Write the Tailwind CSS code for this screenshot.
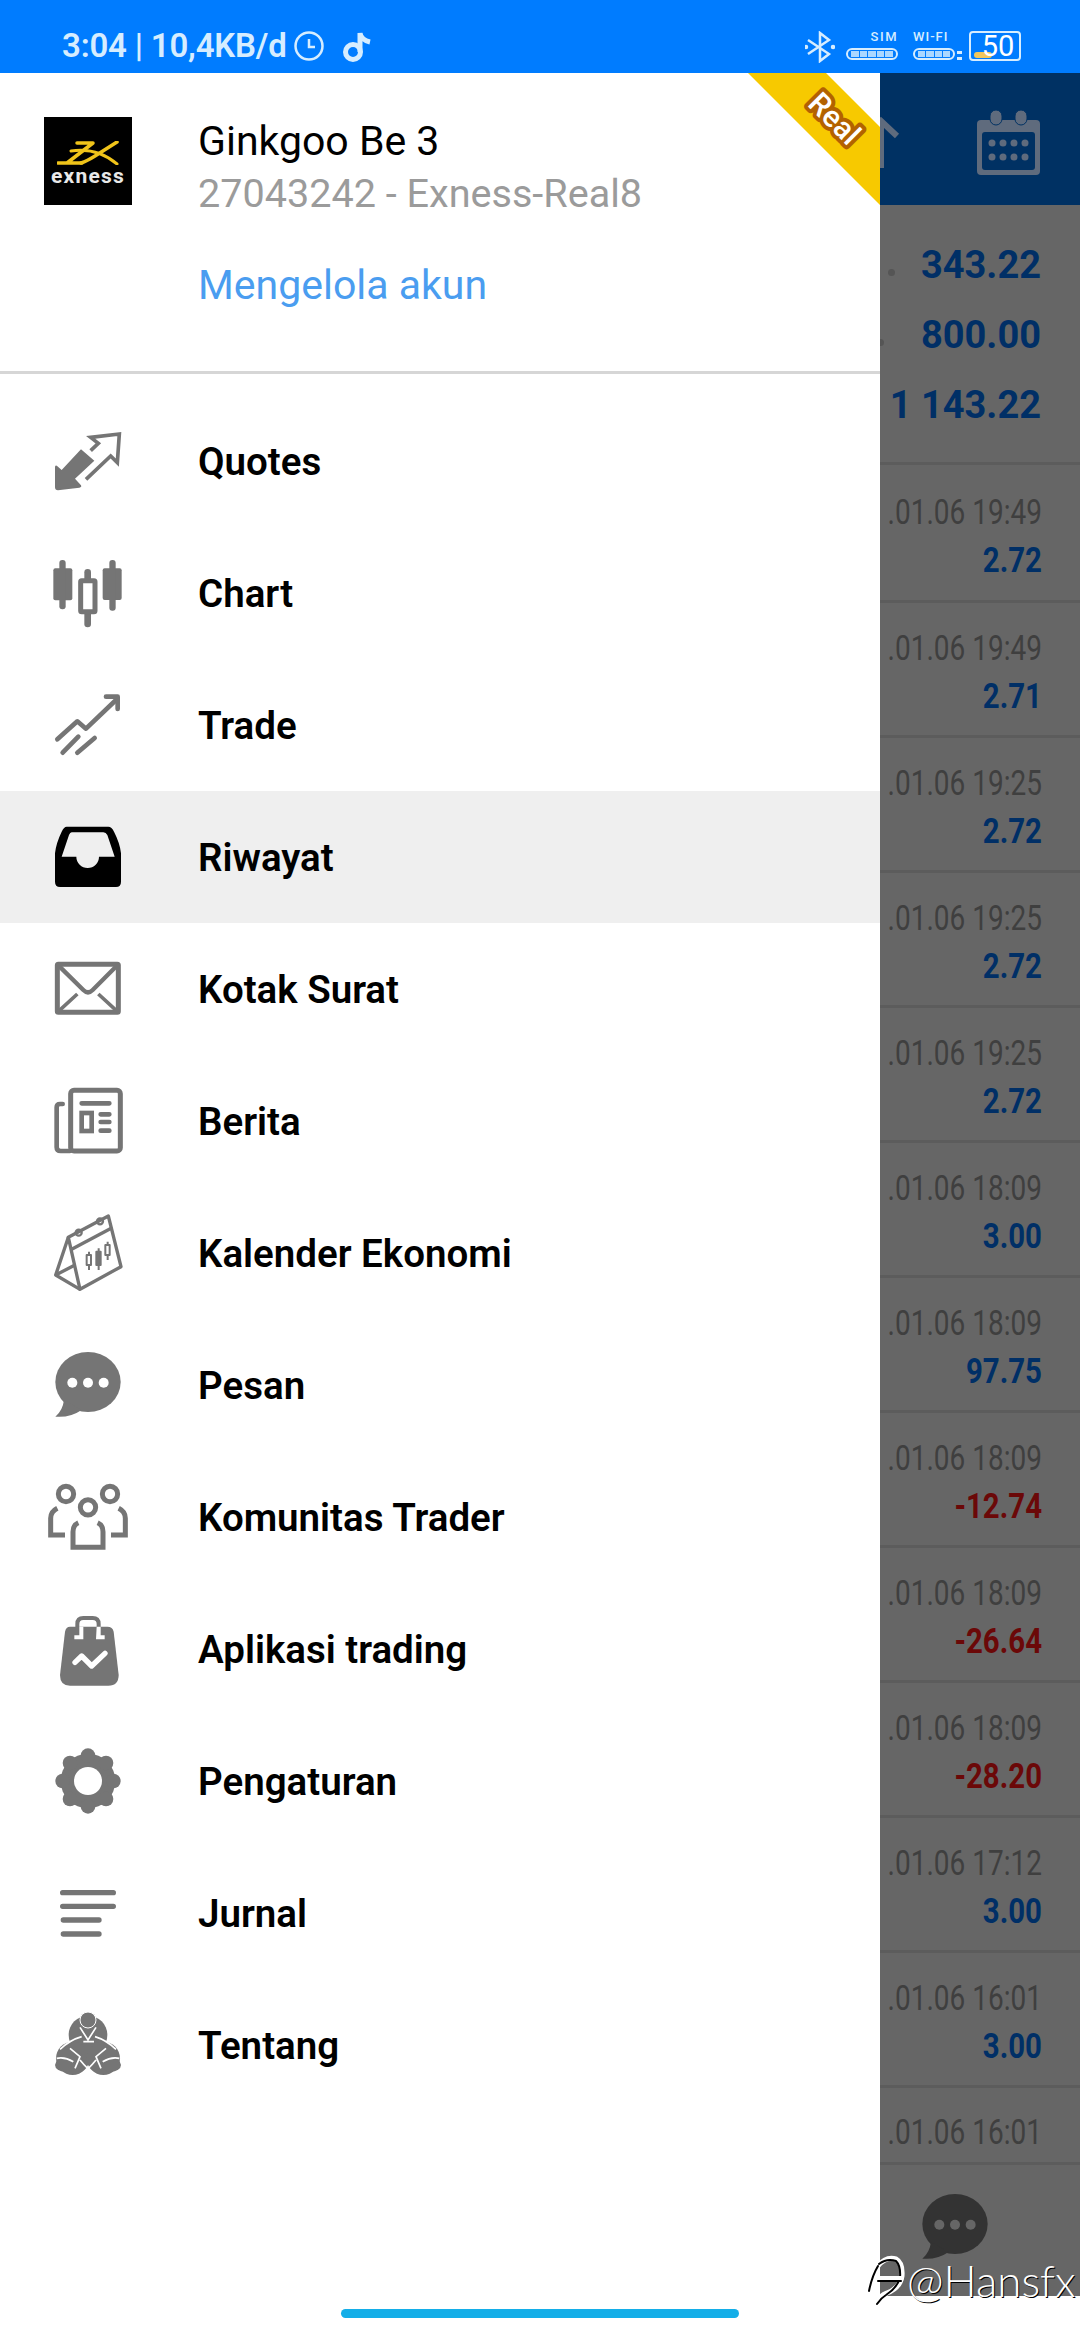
<!DOCTYPE html>
<html lang="en">
<head>
  <meta charset="UTF-8">
  <meta name="viewport" content="width=device-width, initial-scale=1.0">
  <title>Menu</title>
  <script src="https://cdn.jsdelivr.net/npm/@tailwindcss/browser@4"></script>
</head>
<body class="bg-white font-['Roboto',sans-serif]">
<div class="relative w-[1080px] h-[2340px] overflow-hidden flex flex-col bg-white">

  <!-- status bar -->
  <div class="h-[73px] bg-[#007cff] flex items-start text-[#d6edff] shrink-0">
    <div class="ml-[62px] mt-[25px] text-[33px] leading-[42px] font-semibold tracking-[-0.2px] whitespace-nowrap">3:04 | 10,4KB/d</div>
    <svg class="ml-[7px] mt-[31px]" width="30" height="30" viewBox="0 0 30 30" fill="none" stroke="#d6edff"><circle cx="15" cy="15" r="13.5" stroke-width="2.5"/><path d="M15 8v8h6" stroke-width="2.5"/></svg>
    <svg class="ml-[18px] mt-[30px]" width="32" height="33" viewBox="0 0 32 33" fill="none" stroke="#d6edff" stroke-width="5"><circle cx="11" cy="22" r="7.5"/><path d="M18 22V3q1 7 10 9"/></svg>
    <div class="ml-auto mr-[59px] mt-[31px] flex items-start">
      <svg class="mr-[11px]" width="30" height="32" viewBox="0 0 30 32" fill="none" stroke="#d6edff" stroke-width="2.5"><path d="M3 9l21 14-9 7V2l9 7L3 23"/><circle cx="1" cy="16" r="1" fill="#d6edff"/><circle cx="28" cy="16" r="1" fill="#d6edff"/></svg>
      <div class="w-[52px] flex flex-col items-end">
        <div class="text-[13px] leading-[12px] tracking-[1.5px] font-medium">SIM</div>
        <div class="mt-[5px] w-[52px] h-[12px] rounded-full border-2 border-[#d6edff] px-[3px] py-[1px] flex gap-[1px]">
          <div class="flex-1 bg-[#d6edff]/80"></div><div class="flex-1 bg-[#d6edff]/80"></div><div class="flex-1 bg-[#d6edff]/80"></div><div class="flex-1 bg-[#d6edff]/80"></div><div class="flex-1 bg-[#d6edff]/80"></div>
        </div>
      </div>
      <div class="ml-[15px] w-[42px] flex flex-col items-start">
        <div class="text-[13px] leading-[12px] tracking-[1px] font-medium whitespace-nowrap">WI-FI</div>
        <div class="mt-[5px] w-[42px] h-[12px] rounded-full border-2 border-[#d6edff] px-[3px] py-[1px] flex gap-[1px]">
          <div class="flex-1 bg-[#d6edff]/80"></div><div class="flex-1 bg-[#d6edff]/80"></div><div class="flex-1 bg-[#d6edff]/80"></div><div class="flex-1 bg-[#d6edff]/80"></div>
        </div>
      </div>
      <div class="ml-[2px] mt-[20px] mr-[7px] w-[5px] h-[9px] border-y-[3px] border-[#d6edff]"></div>
      <div class="relative w-[52px] h-[30px] rounded-[4px] border-2 border-[#d6edff] flex items-center justify-center">
        <div class="absolute left-[3px] bottom-[1px] w-[18px] h-[6px] rounded-full bg-[#f2c75c]"></div>
        <span class="relative text-[29px] leading-[28px] ml-[6px] text-white">50</span>
      </div>
    </div>
  </div>

  <div class="flex h-[2223px]">
    <!-- drawer -->
    <div class="relative w-[880px] bg-white flex flex-col shrink-0">
      <svg class="absolute right-0 top-0" width="132" height="132" viewBox="0 0 132 132">
        <path d="M0 0H78L132 54V132Z" fill="#f7c900"/>
        <text x="87" y="56" transform="rotate(45 87 45)" text-anchor="middle" font-family="Roboto" font-weight="500" font-size="30" fill="#fff" stroke="#b36200" stroke-width="8" stroke-linejoin="round" class="[paint-order:stroke]">Real</text>
      </svg>

      <div class="h-[298px] flex pl-[44px] border-b-[3px] border-[#d6d6d6] box-content shrink-0">
        <div class="mt-[44px] w-[88px] h-[88px] bg-black flex flex-col items-center shrink-0">
          <svg class="mt-[24px]" width="62" height="24" viewBox="0 0 62 24" fill="none" stroke="#f0c41a" stroke-linecap="round" stroke-linejoin="round"><path d="M20 2H36L10 22M1 22H25" stroke-width="3.5"/><path d="M60 1L38 15Q30 20 24 22" stroke-width="3.5"/><path d="M14 10Q40 6 60 23" stroke-width="3"/></svg>
          <div class="text-[21px] leading-[24px] mt-[-1px] font-bold text-[#e8e8e8] tracking-[1.2px]">exness</div>
        </div>
        <div class="ml-[66px] mt-[45px] flex flex-col whitespace-nowrap">
          <div class="text-[41px] leading-[46px] text-black">Ginkgoo Be 3</div>
          <div class="mt-[7px] text-[39.6px] leading-[46px] text-[#9b9b9b]">27043242 - Exness-Real8</div>
          <div class="mt-[45px] text-[41px] leading-[46px] text-[#4a9df0]">Mengelola akun</div>
        </div>
      </div>

      <div class="pt-[21px] flex flex-col text-[38.5px] font-semibold text-black">
        <div class="h-[132px] flex items-center">
          <div class="w-[176px] flex justify-center"><svg class="overflow-visible" width="80" height="80" viewBox="84 33 240 240" fill="#757575"><path d="M105 172Q105 162 114 170L125 180L183 118L223 152L165 206L183 226Q186 232 178 233L114 241Q105 241 105 232Z"/><path d="M212 122L235 100L212 82L298 72L292 158L272 138L198 208" fill="none" stroke="#757575" stroke-width="11"/></svg></div>
          <div class="ml-[22px] pt-[2px]">Quotes</div>
        </div>
        <div class="h-[132px] flex items-center">
          <div class="w-[176px] flex justify-center"><svg class="overflow-visible" width="80" height="80" viewBox="84 429 240 240" fill="#757575"><rect x="100" y="475" width="57" height="96" rx="6"/><rect x="118" y="450" width="19" height="148" rx="9"/><rect x="248" y="475" width="57" height="95" rx="6"/><rect x="268" y="450" width="19" height="152" rx="9"/><rect x="193" y="477" width="20" height="175" rx="10"/><rect x="182" y="512" width="43" height="93" rx="3" fill="#fff" stroke="#757575" stroke-width="15"/></svg></div>
          <div class="ml-[22px] pt-[2px]">Chart</div>
        </div>
        <div class="h-[132px] flex items-center">
          <div class="w-[176px] flex justify-center"><svg class="overflow-visible" width="80" height="80" viewBox="84 825 240 240" fill="none" stroke="#757575" stroke-width="14" stroke-linecap="round" stroke-linejoin="round"><path d="M112 988L172 934L198 956L288 870"/><path d="M258 860H293V897"/><path d="M128 1028L175 980M172 1028L224 984"/></svg></div>
          <div class="ml-[22px] pt-[2px]">Trade</div>
        </div>
        <div class="h-[132px] flex items-center bg-[#efefef]">
          <div class="w-[176px] flex justify-center"><svg class="overflow-visible" width="80" height="80" viewBox="84 1221 240 240"><path d="M140 1250H265Q275 1250 282 1265Q300 1300 303 1330V1415Q303 1431 288 1431H120Q105 1431 105 1415V1330Q108 1300 125 1265Q132 1250 140 1250Z" fill="#000"/><path d="M155 1267H250Q258 1267 262 1275L284 1340H237A34 34 0 0 1 169 1340H125L147 1275Q150 1267 155 1267Z" fill="#efefef"/></svg></div>
          <div class="ml-[22px] pt-[2px]">Riwayat</div>
        </div>
        <div class="h-[132px] flex items-center">
          <div class="w-[176px] flex justify-center"><svg class="overflow-visible" width="80" height="80" viewBox="84 87 240 240" fill="none" stroke="#757575"><rect x="112" y="133" width="183" height="144" rx="3" stroke-width="15"/><path d="M112 133L190 210Q204 224 218 210L295 133" stroke-width="13"/><path d="M112 277L172 222M295 277L235 222" stroke-width="11"/></svg></div>
          <div class="ml-[22px] pt-[2px]">Kotak Surat</div>
        </div>
        <div class="h-[132px] flex items-center">
          <div class="w-[176px] flex justify-center"><svg class="overflow-visible" width="80" height="80" viewBox="84 483 240 240" fill="none" stroke="#757575"><rect x="152" y="511" width="149" height="182" rx="10" stroke-width="15"/><path d="M128 552H120Q110 552 110 562V682Q110 693 122 693H150" stroke-width="14" stroke-linecap="round"/><path d="M185 550H268M242 583H268M242 606H268M242 632H268" stroke-width="14" stroke-linecap="round"/><rect x="185" y="579" width="30" height="54" stroke-width="14"/></svg></div>
          <div class="ml-[22px] pt-[2px]">Berita</div>
        </div>
        <div class="h-[132px] flex items-center">
          <div class="w-[176px] flex justify-center"><svg class="overflow-visible" width="80" height="80" viewBox="84 879 240 240" fill="none" stroke="#757575" stroke-width="10" stroke-linejoin="round"><path d="M145 952L265 888L303 1040L180 1108Z"/><path d="M155 988L275 924"/><path d="M145 952L107 1065L180 1108M107 1065L165 1035"/><circle cx="176" cy="938" r="9" stroke-width="7"/><circle cx="240" cy="904" r="9" stroke-width="7"/><g stroke-width="6"><path d="M207 995V1050M236 985V1050M263 965V1020"/><rect x="200" y="1005" width="13" height="30" fill="#fff"/><rect x="229" y="995" width="13" height="40" fill="#757575"/><rect x="256" y="975" width="13" height="30" fill="#fff"/></g></svg></div>
          <div class="ml-[22px] pt-[2px]">Kalender Ekonomi</div>
        </div>
        <div class="h-[132px] flex items-center">
          <div class="w-[176px] flex justify-center"><svg class="overflow-visible" width="80" height="80" viewBox="84 1275 240 240" fill="#757575"><ellipse cx="204" cy="1386" rx="98" ry="90"/><path d="M132 1440Q128 1472 106 1490Q150 1494 185 1470Z"/><g fill="#fff"><circle cx="157" cy="1388" r="15"/><circle cx="204" cy="1388" r="15"/><circle cx="251" cy="1388" r="15"/></g></svg></div>
          <div class="ml-[22px] pt-[2px]">Pesan</div>
        </div>
        <div class="h-[132px] flex items-center">
          <div class="w-[176px] flex justify-center"><svg class="overflow-visible" width="80" height="80" viewBox="84 141 240 240" fill="none" stroke="#757575" stroke-width="15"><circle cx="138" cy="192" r="23"/><circle cx="270" cy="192" r="23"/><circle cx="204" cy="232" r="23"/><path d="M112 235Q92 245 92 265V315H135M296 235Q316 245 316 265V315H273"/><path d="M175 278Q159 285 159 305V352H249V305Q249 285 233 278"/></svg></div>
          <div class="ml-[22px] pt-[2px]">Komunitas Trader</div>
        </div>
        <div class="h-[132px] flex items-center">
          <div class="w-[176px] flex justify-center"><svg class="overflow-visible" width="80" height="80" viewBox="84 537 240 240" fill="#757575"><path d="M172 592V582Q172 564 190 564H218Q236 564 236 582V592" fill="none" stroke="#757575" stroke-width="12"/><path d="M150 590H262Q278 590 281 605L296 735Q296 767 265 767H150Q120 767 120 735L135 605Q138 590 150 590Z"/><path d="M178 590H190V628H163V616H178ZM230 590H242V616H254V628H228Z" fill="#fff"/><path d="M165 697L185 678L215 708L255 670" fill="none" stroke="#fff" stroke-width="16" stroke-linecap="round" stroke-linejoin="round"/></svg></div>
          <div class="ml-[22px] pt-[2px]">Aplikasi trading</div>
        </div>
        <div class="h-[132px] flex items-center">
          <div class="w-[176px] flex justify-center"><svg class="overflow-visible" width="80" height="80" viewBox="84 933 240 240" fill="#757575"><circle cx="204" cy="1053" r="82"/><circle cx="204" cy="977" r="22"/><circle cx="258" cy="999" r="22"/><circle cx="280" cy="1053" r="22"/><circle cx="258" cy="1107" r="22"/><circle cx="204" cy="1129" r="22"/><circle cx="150" cy="1107" r="22"/><circle cx="128" cy="1053" r="22"/><circle cx="150" cy="999" r="22"/><circle cx="204" cy="1053" r="42" fill="#fff"/></svg></div>
          <div class="ml-[22px] pt-[2px]">Pengaturan</div>
        </div>
        <div class="h-[132px] flex items-center">
          <div class="w-[176px] flex justify-center"><svg class="overflow-visible" width="80" height="80" viewBox="84 99 240 240" fill="none" stroke="#757575" stroke-width="16" stroke-linecap="round"><path d="M128 158H280M128 199H280M130 240H237M130 282H237"/></svg></div>
          <div class="ml-[22px] pt-[2px]">Jurnal</div>
        </div>
        <div class="h-[132px] flex items-center">
          <div class="w-[176px] flex justify-center"><svg class="overflow-visible" width="80" height="80" viewBox="84 495 240 240" fill="#757575"><circle cx="204" cy="585" r="58"/><circle cx="158" cy="655" r="50"/><circle cx="250" cy="655" r="50"/><ellipse cx="135" cy="675" rx="30" ry="20"/><ellipse cx="273" cy="675" rx="30" ry="20"/><circle cx="204" cy="540" r="24" stroke="#fff" stroke-width="3"/><g fill="none" stroke="#fff" stroke-width="5"><path d="M180 562L204 600L228 562M190 605H222M120 628Q150 600 185 590M288 628Q258 600 225 590"/><path d="M150 625L180 650L165 685M258 625L228 650L243 685M180 660Q204 690 228 705M228 660Q204 690 180 705M110 655Q135 650 160 665M298 655Q273 650 248 665"/></g></svg></div>
          <div class="ml-[22px] pt-[2px]">Tentang</div>
        </div>
      </div>
    </div>

    <!-- dimmed page behind the drawer -->
    <div class="w-[200px] bg-[#666666] flex flex-col overflow-hidden">
      <div class="relative h-[132px] bg-[#003163] flex items-center justify-between shrink-0">
        <svg class="mt-[6px]" width="20" height="60" viewBox="0 0 20 60" fill="none" stroke="#5f6b7d" stroke-width="6"><path d="M-10 20L1 9L17 24M1 9V56"/></svg>
        <svg class="mr-[40px] mt-[6px]" width="63" height="65" viewBox="0 0 63 65"><rect y="10" width="63" height="55" rx="4" fill="#5f6b7d"/><rect x="5" y="22" width="53" height="38" rx="3" fill="#003163"/><rect x="13" y="0" width="12" height="15" rx="6" fill="#5f6b7d" stroke="#003163" stroke-width="1"/><rect x="38" y="0" width="12" height="15" rx="6" fill="#5f6b7d" stroke="#003163" stroke-width="1"/><g fill="#5f6b7d"><circle cx="15" cy="33" r="3.5"/><circle cx="26" cy="33" r="3.5"/><circle cx="37" cy="33" r="3.5"/><circle cx="48" cy="33" r="3.5"/><circle cx="15" cy="47" r="3.5"/><circle cx="26" cy="47" r="3.5"/><circle cx="37" cy="47" r="3.5"/><circle cx="48" cy="47" r="3.5"/></g></svg>
      </div>
      <div class="relative h-[260px] pt-[25px] pr-[39px] border-b-[3px] border-[#5c5c5c] text-right text-[38px] leading-[70px] font-bold text-[#002f66] shrink-0">
        <div>343.22</div>
        <div>800.00</div>
        <div class="whitespace-nowrap">1 143.22</div>
        <div class="absolute left-[8px] top-[64px] w-[7px] h-[7px] rounded-full bg-[#555555]"></div>
        <div class="absolute left-0 top-[134px] w-[4px] h-[7px] rounded-r-full bg-[#555555]"></div>
      </div>

      <div class="h-[138px] pt-[25px] pr-[38px] border-b-[3px] border-[#5c5c5c] shrink-0">
        <div class="origin-right scale-x-[0.8] flex justify-end whitespace-nowrap text-[35px] leading-[46px] text-[#3f3f3f]">.01.06 19:49</div>
        <div class="mt-[2px] origin-right scale-x-[0.84] text-right text-[35px] leading-[46px] font-bold text-[#002f66]">2.72</div>
      </div>
      <div class="h-[135px] pt-[23px] pr-[38px] border-b-[3px] border-[#5c5c5c] shrink-0">
        <div class="origin-right scale-x-[0.8] flex justify-end whitespace-nowrap text-[35px] leading-[46px] text-[#3f3f3f]">.01.06 19:49</div>
        <div class="mt-[2px] origin-right scale-x-[0.84] text-right text-[35px] leading-[46px] font-bold text-[#002f66]">2.71</div>
      </div>
      <div class="h-[135px] pt-[23px] pr-[38px] border-b-[3px] border-[#5c5c5c] shrink-0">
        <div class="origin-right scale-x-[0.8] flex justify-end whitespace-nowrap text-[35px] leading-[46px] text-[#3f3f3f]">.01.06 19:25</div>
        <div class="mt-[2px] origin-right scale-x-[0.84] text-right text-[35px] leading-[46px] font-bold text-[#002f66]">2.72</div>
      </div>
      <div class="h-[135px] pt-[23px] pr-[38px] border-b-[3px] border-[#5c5c5c] shrink-0">
        <div class="origin-right scale-x-[0.8] flex justify-end whitespace-nowrap text-[35px] leading-[46px] text-[#3f3f3f]">.01.06 19:25</div>
        <div class="mt-[2px] origin-right scale-x-[0.84] text-right text-[35px] leading-[46px] font-bold text-[#002f66]">2.72</div>
      </div>
      <div class="h-[135px] pt-[23px] pr-[38px] border-b-[3px] border-[#5c5c5c] shrink-0">
        <div class="origin-right scale-x-[0.8] flex justify-end whitespace-nowrap text-[35px] leading-[46px] text-[#3f3f3f]">.01.06 19:25</div>
        <div class="mt-[2px] origin-right scale-x-[0.84] text-right text-[35px] leading-[46px] font-bold text-[#002f66]">2.72</div>
      </div>
      <div class="h-[135px] pt-[23px] pr-[38px] border-b-[3px] border-[#5c5c5c] shrink-0">
        <div class="origin-right scale-x-[0.8] flex justify-end whitespace-nowrap text-[35px] leading-[46px] text-[#3f3f3f]">.01.06 18:09</div>
        <div class="mt-[2px] origin-right scale-x-[0.84] text-right text-[35px] leading-[46px] font-bold text-[#002f66]">3.00</div>
      </div>
      <div class="h-[135px] pt-[23px] pr-[38px] border-b-[3px] border-[#5c5c5c] shrink-0">
        <div class="origin-right scale-x-[0.8] flex justify-end whitespace-nowrap text-[35px] leading-[46px] text-[#3f3f3f]">.01.06 18:09</div>
        <div class="mt-[2px] origin-right scale-x-[0.84] text-right text-[35px] leading-[46px] font-bold text-[#002f66]">97.75</div>
      </div>
      <div class="h-[135px] pt-[23px] pr-[38px] border-b-[3px] border-[#5c5c5c] shrink-0">
        <div class="origin-right scale-x-[0.8] flex justify-end whitespace-nowrap text-[35px] leading-[46px] text-[#3f3f3f]">.01.06 18:09</div>
        <div class="mt-[2px] origin-right scale-x-[0.84] text-right text-[35px] leading-[46px] font-bold text-[#6b0808]">-12.74</div>
      </div>
      <div class="h-[135px] pt-[23px] pr-[38px] border-b-[3px] border-[#5c5c5c] shrink-0">
        <div class="origin-right scale-x-[0.8] flex justify-end whitespace-nowrap text-[35px] leading-[46px] text-[#3f3f3f]">.01.06 18:09</div>
        <div class="mt-[2px] origin-right scale-x-[0.84] text-right text-[35px] leading-[46px] font-bold text-[#6b0808]">-26.64</div>
      </div>
      <div class="h-[135px] pt-[23px] pr-[38px] border-b-[3px] border-[#5c5c5c] shrink-0">
        <div class="origin-right scale-x-[0.8] flex justify-end whitespace-nowrap text-[35px] leading-[46px] text-[#3f3f3f]">.01.06 18:09</div>
        <div class="mt-[2px] origin-right scale-x-[0.84] text-right text-[35px] leading-[46px] font-bold text-[#6b0808]">-28.20</div>
      </div>
      <div class="h-[135px] pt-[23px] pr-[38px] border-b-[3px] border-[#5c5c5c] shrink-0">
        <div class="origin-right scale-x-[0.8] flex justify-end whitespace-nowrap text-[35px] leading-[46px] text-[#3f3f3f]">.01.06 17:12</div>
        <div class="mt-[2px] origin-right scale-x-[0.84] text-right text-[35px] leading-[46px] font-bold text-[#002f66]">3.00</div>
      </div>
      <div class="h-[135px] pt-[23px] pr-[38px] border-b-[3px] border-[#5c5c5c] shrink-0">
        <div class="origin-right scale-x-[0.8] flex justify-end whitespace-nowrap text-[35px] leading-[46px] text-[#3f3f3f]">.01.06 16:01</div>
        <div class="mt-[2px] origin-right scale-x-[0.84] text-right text-[35px] leading-[46px] font-bold text-[#002f66]">3.00</div>
      </div>
      <div class="h-[77px] pt-[22px] pr-[38px] border-b-[3px] border-[#5c5c5c] shrink-0">
        <div class="origin-right scale-x-[0.8] flex justify-end whitespace-nowrap text-[35px] leading-[46px] text-[#3f3f3f]">.01.06 16:01</div>
      </div>

      <svg class="ml-[42px] mt-[29px] shrink-0" width="66" height="66" viewBox="105 1296 198 198" fill="#333333"><ellipse cx="204" cy="1386" rx="98" ry="90"/><path d="M132 1440Q128 1472 106 1490Q150 1494 185 1470Z"/><g fill="#666666"><circle cx="157" cy="1388" r="15"/><circle cx="204" cy="1388" r="15"/><circle cx="251" cy="1388" r="15"/></g></svg>
    </div>
  </div>

  <!-- gesture bar -->
  <div class="h-[44px] flex justify-center pt-[13px]">
    <div class="w-[398px] h-[9px] rounded-full bg-[#14aee8]"></div>
  </div>

  <!-- watermark -->
  <div class="absolute left-[866px] top-[2254px] flex items-center">
    <svg width="40" height="52" viewBox="0 0 40 52" fill="none" stroke-linecap="round">
      <path d="M12 12Q20 2 30 5Q37 9 36 22Q34 34 21 39Q14 41 10 50" stroke="#fff" stroke-width="5"/>
      <path d="M13 10Q21 4 30 7Q35 12 34 24Q31 34 20 41Q15 44 11 50" stroke="#000" stroke-width="2"/>
      <path d="M2 24H36" stroke="#fff" stroke-width="4"/>
      <path d="M12 27H35" stroke="#000" stroke-width="2"/>
      <path d="M12 12Q6 22 3 37" stroke="#000" stroke-width="2"/>
    </svg>
    <div class="ml-[1px] text-[44px] leading-[52px] font-['Lato',sans-serif] font-light text-white [text-shadow:1px_1px_0_#000] whitespace-nowrap">@Hansfx</div>
  </div>
</div>
</body>
</html>
